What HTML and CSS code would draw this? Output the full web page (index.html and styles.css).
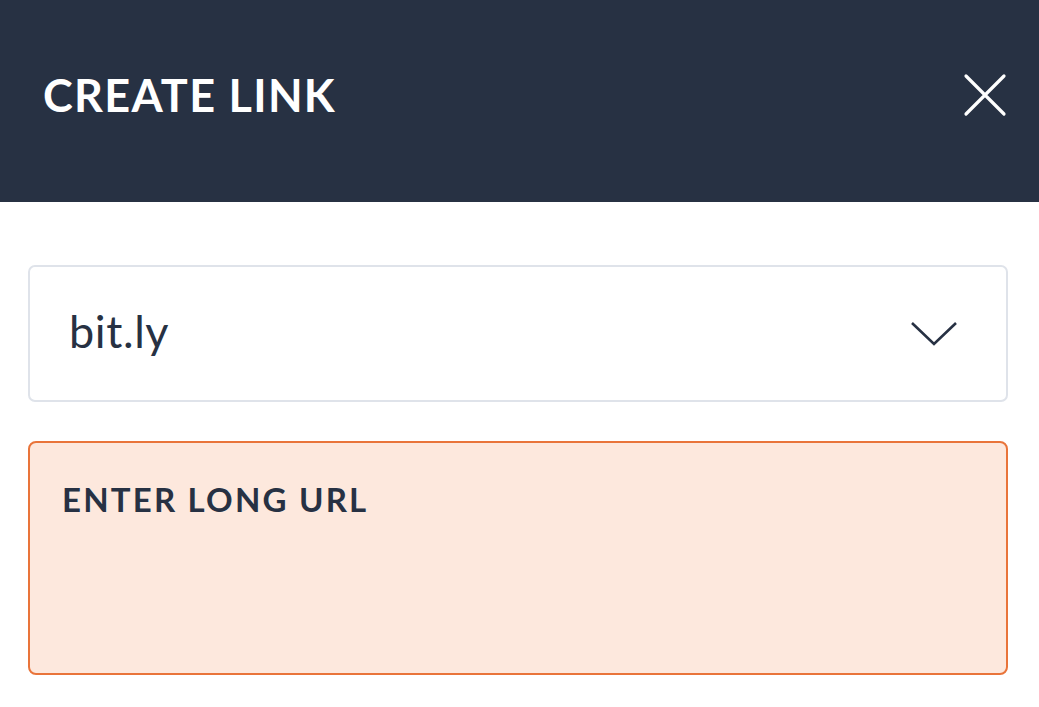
FILE: index.html
```html
<!DOCTYPE html>
<html lang="en">
<head>
  <meta charset="UTF-8" />
  <meta name="viewport" content="width=device-width, initial-scale=1.0" />
  <title>Create Link</title>
  <link rel="stylesheet" href="styles.css">
</head>
<body>
  <header class="top-bar">
    <h1>CREATE LINK</h1>
    <button class="close-btn" aria-label="Close">
      <svg width="44" height="44" viewBox="0 0 44 44">
        <path d="M3 3 L41 41 M41 3 L3 41" stroke="#fff" stroke-width="3.2" stroke-linecap="round" fill="none"/>
      </svg>
    </button>
  </header>
  <main class="content">
    <div class="domain-select">
      <span>bit.ly</span>
      <svg width="48" height="26" viewBox="0 0 48 26">
        <path d="M2 2 L24 23 L46 2" stroke="#273143" stroke-width="2.6" fill="none"/>
      </svg>
    </div>
    <div class="url-box">
      <label>ENTER LONG URL</label>
    </div>
  </main>
</body>
</html>
```

FILE: styles.css
```css
body {
  font-family: 'Lato', 'Open Sans', sans-serif;
  background-color: #fff;
  color: #273143;
  margin: 0;
}
.top-bar {
  background-color: #273143;
  height: 202px;
  display: flex;
  align-items: center;
  justify-content: space-between;
  padding: 0 32px 12px 43px;
  box-sizing: border-box;
}
.top-bar h1 {
  margin: 0;
  color: #fff;
  font-size: 45px;
  font-weight: 700;
  letter-spacing: 1.3px;
}
.close-btn {
  background: none;
  border: none;
  padding: 0;
  width: 44px;
  height: 44px;
  cursor: pointer;
}
.close-btn svg {
  display: block;
}
.content {
  padding: 63px 31px 0 28px;
}
.domain-select {
  height: 137px;
  border: 2px solid #dfe3ea;
  border-radius: 7px;
  box-sizing: border-box;
  display: flex;
  align-items: center;
  justify-content: space-between;
  padding: 0 48px 0 39px;
  font-size: 45px;
  letter-spacing: 0.6px;
}
.domain-select span {
  margin-top: -6px;
}
.url-box {
  margin-top: 39px;
  height: 234px;
  border: 2px solid #e9743a;
  border-radius: 8px;
  background-color: #fde8dd;
  box-sizing: border-box;
  padding: 36px 32px;
}
.url-box label {
  display: block;
  font-size: 33px;
  font-weight: 700;
  letter-spacing: 2.2px;
}
```
